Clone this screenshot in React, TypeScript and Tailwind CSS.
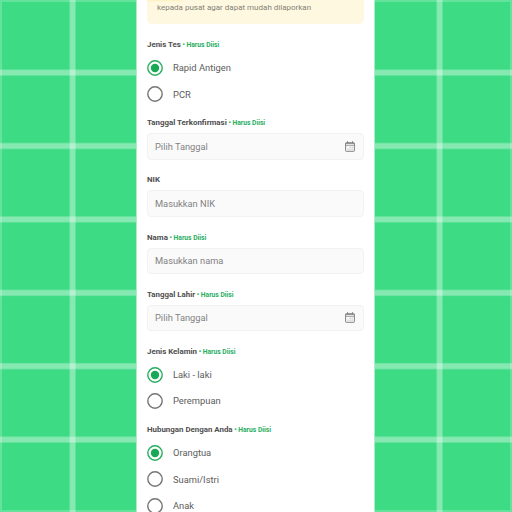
import React from "react";

const LINES = [72.6, 146, 219.4, 292.8, 366.2, 439.6];

function GridBackground() {
  return (
    <svg className="absolute inset-0" width="512" height="512" viewBox="0 0 512 512" aria-hidden="true">
      <rect x="1" y="1" width="510" height="510" fill="none" stroke="#ffffff" strokeOpacity="0.2" strokeWidth="2" />
      {LINES.map((c) => (
        <g key={c} fill="#ffffff" fillOpacity="0.21">
          <rect x={0} y={c - 3.3} width={512} height={6.6} />
          <rect x={0} y={c - 2.5} width={512} height={5} />
          <rect x={c - 3.3} y={0} width={6.6} height={512} />
          <rect x={c - 2.5} y={0} width={5} height={512} />
        </g>
      ))}
    </svg>
  );
}

function CalendarIcon() {
  return (
    <svg width="10" height="11" viewBox="0 0 10 11" fill="none" stroke="#828282" aria-hidden="true">
      <rect x="0.6" y="1.7" width="8.8" height="8.6" rx="0.6" strokeWidth="1" />
      <path d="M0.6 4.3h8.8M0.6 2.5h8.8" strokeWidth="0.8" />
      <path d="M2.5 0.2v2.1M7.5 0.2v2.1" strokeWidth="1.1" />
      <path d="M4.6 6.3h1M6.6 6.3h1M2.5 8.2h1M4.6 8.2h1M6.6 8.2h1" strokeWidth="0.9" strokeOpacity="0.7" />
    </svg>
  );
}

function Label({ text, required }: { text: string; required?: boolean }) {
  return (
    <div className="flex h-[10px] items-center text-[7.9px] leading-[10px] font-bold whitespace-pre text-[#4f4f4f]">
      <span>{text}</span>
      {required && <span className="text-[6.7px] text-[#27ae60]"> • Harus Diisi</span>}
    </div>
  );
}

function Field({ label, placeholder, required, date }: { label: string; placeholder: string; required?: boolean; date?: boolean }) {
  return (
    <div className="h-[57.1px]">
      <Label text={label} required={required} />
      <div className="mt-[5px] flex h-[26.6px] items-center justify-between rounded-[4px] border border-[#f2f2f2] bg-[#fafafa] pr-[8px] pl-[7px] text-[9.3px] text-[#828282]">
        <span>{placeholder}</span>
        {date && <CalendarIcon />}
      </div>
    </div>
  );
}

function Radio({ label, checked }: { label: string; checked?: boolean }) {
  return (
    <div className="flex h-[26.4px] items-center gap-[10px] text-[9.35px] text-[#5c5c5c]">
      <svg width="16" height="16" viewBox="0 0 16 16" aria-hidden="true">
        <circle cx="8" cy="8" r="7.2" fill="none" stroke={checked ? "#27ae60" : "#757575"} strokeWidth="1.4" />
        {checked && <circle cx="8" cy="8" r="4.2" fill="#18a957" />}
      </svg>
      <span className="pt-px">{label}</span>
    </div>
  );
}

function RadioGroup({ label, options }: { label: string; options: string[] }) {
  return (
    <div className="pb-[11px]">
      <Label text={label} required />
      <div className="pt-[4.6px]">
        {options.map((o, i) => (
          <Radio key={o} label={o} checked={i === 0} />
        ))}
      </div>
    </div>
  );
}

export default function App() {
  return (
    <div className="relative h-[512px] w-[512px] overflow-hidden bg-[#3ddc84] font-['Roboto',sans-serif]">
      <GridBackground />
      <main className="relative ml-[136px] h-[512px] w-[239px] overflow-hidden border-x border-[#a8efc8] bg-white bg-clip-padding px-[10px]">
        <div className="h-[24px] overflow-hidden rounded-b-[5px] bg-[#fff8e1]">
          <div className="h-[2px] w-[36px] bg-gradient-to-b from-[#ffefbd] to-[#fff8e1]" />
          <p className="pl-[10px] text-[8px] leading-[11px] text-[#828274]">kepada pusat agar dapat mudah dilaporkan</p>
        </div>
        <div className="pt-[16px]">
          <RadioGroup label="Jenis Tes" options={["Rapid Antigen", "PCR"]} />
          <Field label="Tanggal Terkonfirmasi" placeholder="Pilih Tanggal" required date />
          <Field label="NIK" placeholder="Masukkan NIK" />
          <Field label="Nama" placeholder="Masukkan nama" required />
          <Field label="Tanggal Lahir" placeholder="Pilih Tanggal" required date />
          <RadioGroup label="Jenis Kelamin" options={["Laki - laki", "Perempuan"]} />
          <RadioGroup label="Hubungan Dengan Anda" options={["Orangtua", "Suami/Istri", "Anak"]} />
        </div>
      </main>
    </div>
  );
}
